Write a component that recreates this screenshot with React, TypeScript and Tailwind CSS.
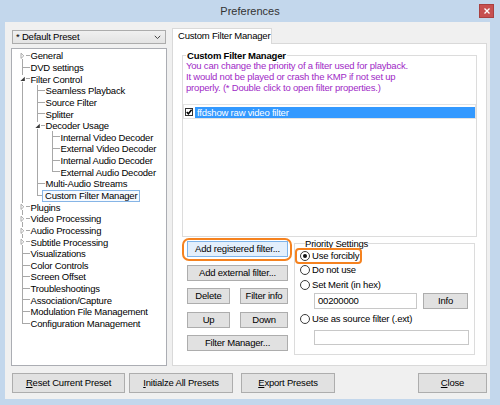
import React from 'react';

type Glyph = 'collapsed' | 'expanded';

interface TreeItem {
  label: string;
  level: number;
  glyph?: Glyph;
  selected?: boolean;
}

const treeItems: TreeItem[] = [
  { label: 'General', level: 0, glyph: 'collapsed' },
  { label: 'DVD settings', level: 0 },
  { label: 'Filter Control', level: 0, glyph: 'expanded' },
  { label: 'Seamless Playback', level: 1 },
  { label: 'Source Filter', level: 1 },
  { label: 'Splitter', level: 1 },
  { label: 'Decoder Usage', level: 1, glyph: 'expanded' },
  { label: 'Internal Video Decoder', level: 2 },
  { label: 'External Video Decoder', level: 2 },
  { label: 'Internal Audio Decoder', level: 2 },
  { label: 'External Audio Decoder', level: 2 },
  { label: 'Multi-Audio Streams', level: 1 },
  { label: 'Custom Filter Manager', level: 1, selected: true },
  { label: 'Plugins', level: 0, glyph: 'collapsed' },
  { label: 'Video Processing', level: 0, glyph: 'collapsed' },
  { label: 'Audio Processing', level: 0, glyph: 'collapsed' },
  { label: 'Subtitle Processing', level: 0, glyph: 'collapsed' },
  { label: 'Visualizations', level: 0 },
  { label: 'Color Controls', level: 0 },
  { label: 'Screen Offset', level: 0 },
  { label: 'Troubleshootings', level: 0 },
  { label: 'Association/Capture', level: 0 },
  { label: 'Modulation File Management', level: 0 },
  { label: 'Configuration Management', level: 0 },
];

const ROW_H = 11.65;
const COL_W = 15;
const LINE = '#a8a8a8';

// a later row on the same level shows up before the tree climbs back above it
const hasLaterSibling = (index: number, level: number) => {
  for (let j = index + 1; j < treeItems.length; j++) {
    if (treeItems[j].level < level) return false;
    if (treeItems[j].level === level) return true;
  }
  return false;
};

interface CellProps {
  top?: boolean;
  bottom?: boolean;
  stub?: boolean;
  glyph?: Glyph;
}

const TreeCell: React.FC<CellProps> = ({ top, bottom, stub, glyph }) => {
  const cx = 7.5;
  const cy = ROW_H / 2;
  const gap = glyph ? 3.5 : 0;
  return (
    <svg width={COL_W} height={ROW_H} className="block shrink-0">
      {top && <line x1={cx} y1={0} x2={cx} y2={cy - gap} stroke={LINE} shapeRendering="crispEdges" />}
      {bottom && <line x1={cx} y1={cy + gap} x2={cx} y2={ROW_H} stroke={LINE} shapeRendering="crispEdges" />}
      {stub && <line x1={glyph ? 11 : cx} y1={cy} x2={COL_W} y2={cy} stroke={LINE} shapeRendering="crispEdges" />}
      {glyph === 'collapsed' && (
        <path d={`M6 ${cy - 2.6} L8.8 ${cy} L6 ${cy + 2.6} Z`} fill="white" stroke="#a0a0a0" strokeWidth="0.9" />
      )}
      {glyph === 'expanded' && <path d={`M9.8 ${cy - 2.2} L9.8 ${cy + 2.2} L5.4 ${cy + 2.2} Z`} fill="#3a3a3a" />}
    </svg>
  );
};

const TreeRow: React.FC<{ item: TreeItem; index: number }> = ({ item, index }) => {
  const cells = [];
  for (let c = 0; c < item.level; c++) {
    const through = hasLaterSibling(index, c);
    cells.push(<TreeCell key={c} top={through} bottom={through} />);
  }
  cells.push(
    <TreeCell
      key="own"
      top={!(item.level === 0 && index === 0)}
      bottom={hasLaterSibling(index, item.level)}
      stub
      glyph={item.glyph}
    />
  );
  return (
    <div className="flex items-center h-[11.65px] whitespace-nowrap">
      {cells}
      {item.selected ? (
        <span className="-ml-[3px] px-[2px] leading-[10px] border border-[#86b5e6] bg-[#f6faff]">{item.label}</span>
      ) : (
        <span className="ml-[0.5px] leading-[11px]">{item.label}</span>
      )}
    </div>
  );
};

interface BtnProps {
  children: React.ReactNode;
  className?: string;
  hot?: boolean;
}

const WinButton: React.FC<BtnProps> = ({ children, className = '', hot = false }) => (
  <button
    type="button"
    className={`flex items-center justify-center border leading-none text-black ${
      hot ? 'bg-[#e3effc] border-[#7eb4ea]' : 'bg-[#e1e1e1] border-[#adadad]'
    } ${className}`}
  >
    {children}
  </button>
);

const Radio: React.FC<{ checked?: boolean }> = ({ checked }) => (
  <span className="w-[10px] h-[10px] rounded-full border border-[#3a3a3a] bg-white flex items-center justify-center shrink-0">
    {checked && <span className="w-[4px] h-[4px] rounded-full bg-[#111]" />}
  </span>
);

const RadioRow: React.FC<{ checked?: boolean; label: string }> = ({ checked, label }) => (
  <div className="flex items-center gap-[2px] h-[14.5px] whitespace-nowrap">
    <Radio checked={checked} />
    <span>{label}</span>
  </div>
);

export default function App() {
  return (
    <div className="w-[500px] h-[405px] bg-[#c3d7ec] flex flex-col overflow-hidden font-['Liberation_Sans',Arial,sans-serif] text-[9.5px] tracking-[-0.2px] text-black select-none">
      {/* title bar */}
      <div className="h-[22px] shrink-0 grid grid-cols-[1fr_auto_1fr] items-center">
        <div />
        <div className="text-[11px] tracking-normal text-[#333] pt-[1px]">Preferences</div>
        <div className="flex justify-end pr-[6px] self-start pt-[4px]">
          <button type="button" className="w-[15px] h-[14px] bg-[#c75050] border border-[#a94040] flex items-center justify-center">
            <svg width="6" height="6">
              <path d="M0.5 0.5 L5.5 5.5 M5.5 0.5 L0.5 5.5" stroke="white" strokeWidth="1.3" />
            </svg>
          </button>
        </div>
      </div>

      {/* client area */}
      <div className="ml-[5px] mr-[10px] mb-[6px] flex-1 bg-[#f0f0f0] flex flex-col pt-[6px] pl-[6px] pr-[3px]">
        <div className="h-[338px] flex gap-[5px]">
          {/* left column */}
          <div className="w-[156px] flex flex-col">
            <div className="mt-[2px] mx-[1px] h-[14px] border border-[#acacac] bg-gradient-to-b from-[#f0f0f0] to-[#e3e3e3] flex items-center pl-[3px] pr-[4px]">
              <span className="flex-1 leading-none">* Default Preset</span>
              <svg width="7" height="5">
                <path d="M0.8 0.8 L3.5 3.6 L6.2 0.8" fill="none" stroke="#444" strokeWidth="1" />
              </svg>
            </div>
            <div className="mt-[4px] flex-1 bg-white border border-[#abadb3] pt-[1px] pl-[3px] overflow-hidden">
              {treeItems.map((item, i) => (
                <TreeRow key={item.label} item={item} index={i} />
              ))}
            </div>
          </div>

          {/* right column */}
          <div className="flex-1 flex flex-col">
            <div className="flex">
              <div className="relative z-10 -mb-px w-[100px] h-[16px] bg-white border border-b-0 border-[#d9d9d9] pl-[5px] flex items-center whitespace-nowrap">
                Custom Filter Manager
              </div>
            </div>
            <div className="flex-1 bg-white border border-[#d9d9d9] px-[9px] pt-[6px] flex flex-col">
              <fieldset className="border border-[#dcdcdc] h-[186.5px] flex flex-col">
                <legend className="ml-[3px] px-[1px] font-bold leading-[11px]">Custom Filter Manager</legend>
                <div className="-mt-[1px] pl-[3px] text-[#a029c6] leading-[11px] whitespace-nowrap">
                  <div>You can change the priority of a filter used for playback.</div>
                  <div>It would not be played or crash the KMP if not set up</div>
                  <div>properly. (* Double click to open filter properties.)</div>
                </div>
                <div className="mt-[10.5px] mb-[1px] flex-1 border border-[#e3e3e3] pt-[2px] pl-[1px]">
                  <div className="flex items-center gap-[2px] h-[11px]">
                    <svg width="8" height="8" className="shrink-0">
                      <rect x="0.5" y="0.5" width="7" height="7" fill="white" stroke="#333" />
                      <path d="M1.7 4 L3.4 5.8 L6.6 1.8" fill="none" stroke="#000" strokeWidth="1.5" />
                    </svg>
                    <div className="flex-1 h-[11px] bg-[#3399ff] text-white pl-[2px] leading-[11px]">ffdshow raw video filter</div>
                  </div>
                </div>
              </fieldset>

              <div className="flex mt-[1px]">
                <div className="ml-[5px] mt-[3.5px] w-[101px] flex flex-col gap-[7.5px]">
                  <div className="relative">
                    <WinButton hot className="w-full h-[16px]">Add registered filter...</WinButton>
                    <div className="absolute -left-[5px] -right-[4px] -top-[3px] -bottom-[4px] border-2 border-[#f5821f] rounded-[7px] pointer-events-none" />
                  </div>
                  <WinButton className="w-full h-[16px]">Add external filter...</WinButton>
                  <div className="flex justify-between">
                    <WinButton className="w-[43px] h-[16px]">Delete</WinButton>
                    <WinButton className="w-[48px] h-[16px]">Filter info</WinButton>
                  </div>
                  <div className="flex justify-between">
                    <WinButton className="w-[43px] h-[16px]">Up</WinButton>
                    <WinButton className="w-[48px] h-[16px]">Down</WinButton>
                  </div>
                  <WinButton className="w-full h-[16px]">Filter Manager...</WinButton>
                </div>

                <fieldset className="ml-[6px] w-[181px] border border-[#dcdcdc] pl-[5px] pb-[9px]">
                  <legend className="ml-[5px] leading-[11px]">Priority Settings</legend>
                  <div className="relative w-max">
                    <RadioRow checked label="Use forcibly" />
                    <div className="absolute -left-[5px] -right-[3px] -top-[0.5px] -bottom-[0.5px] border-2 border-[#f5821f] rounded-[4px] pointer-events-none" />
                  </div>
                  <RadioRow label="Do not use" />
                  <RadioRow label="Set Merit (in hex)" />
                  <div className="mt-[1px] pl-[14px] flex gap-[6px]">
                    <div className="w-[103px] h-[16px] border border-[#c8c8c8] bg-white flex items-center pl-[3px]">00200000</div>
                    <WinButton className="w-[45px] h-[16px]">Info</WinButton>
                  </div>
                  <div className="mt-[3px]">
                    <RadioRow label="Use as source filter (.ext)" />
                  </div>
                  <div className="mt-[3.5px] ml-[14px] w-[155px] h-[15px] border border-[#c8c8c8] bg-white" />
                </fieldset>
              </div>
            </div>
          </div>
        </div>

        {/* bottom buttons */}
        <div className="mt-[7px] h-[20px] flex">
          <WinButton className="ml-[1px] w-[113px] h-[20px]">
            <span className="underline">R</span>eset Current Preset
          </WinButton>
          <WinButton className="ml-[4px] w-[104px] h-[20px]">
            <span className="underline">I</span>nitialze All Presets
          </WinButton>
          <WinButton className="ml-[8px] w-[94px] h-[20px]">
            <span className="underline">E</span>xport Presets
          </WinButton>
          <WinButton className="ml-auto w-[69px] h-[20px]">
            <span className="underline">C</span>lose
          </WinButton>
        </div>
      </div>
    </div>
  );
}
